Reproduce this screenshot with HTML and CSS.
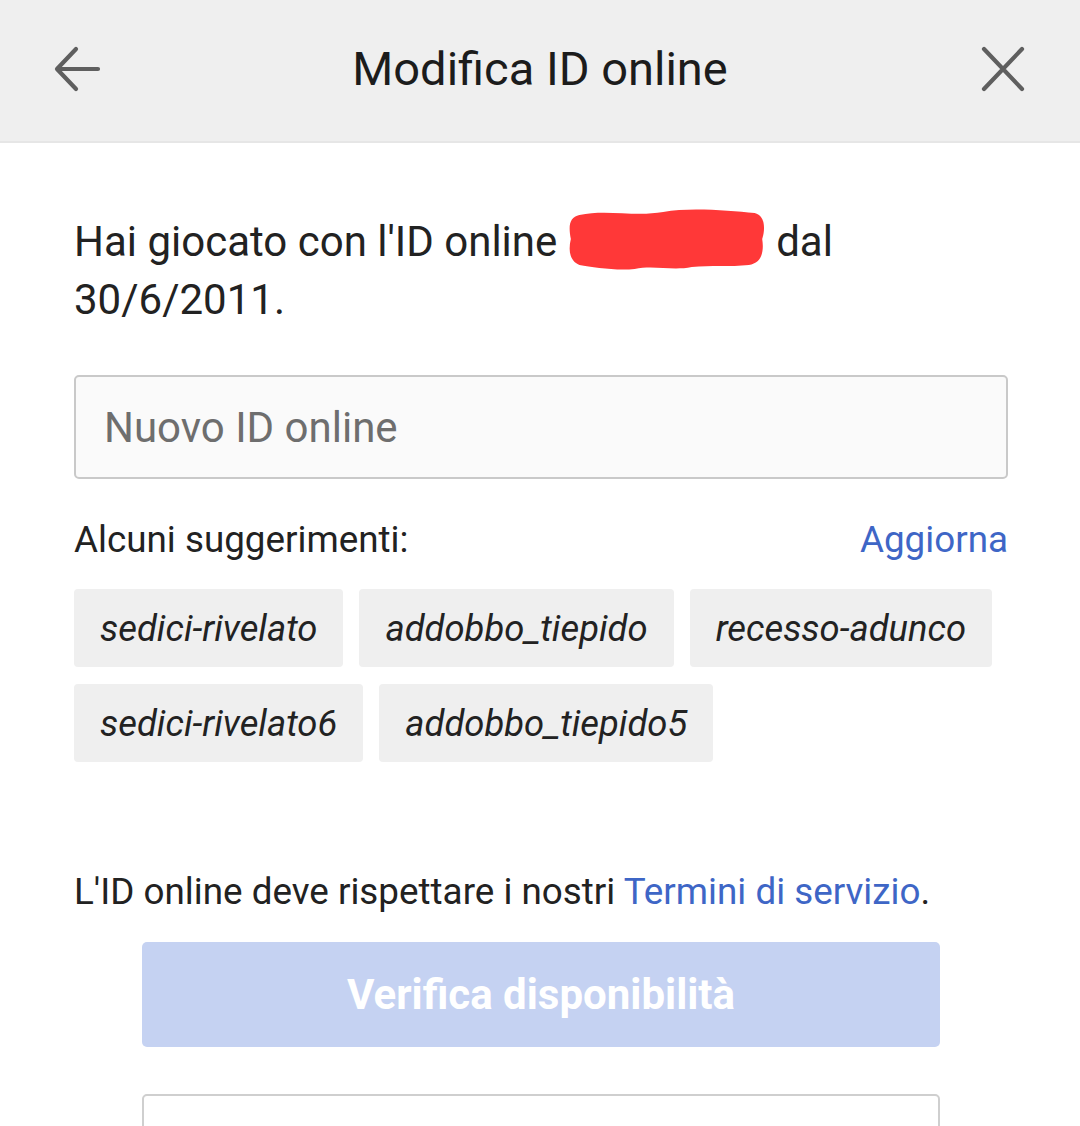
FILE: index.html
```html
<!DOCTYPE html>
<html lang="it">
<head>
    <meta charset="UTF-8">
    <meta name="viewport" content="width=device-width, initial-scale=1.0">
    <title>Modifica ID online</title>
    <link rel="stylesheet" href="styles.css">
</head>
<body>
    <header class="top-bar">
        <button class="icon-btn" aria-label="Indietro">
            <svg width="48" height="48" viewBox="0 0 48 48">
                <path d="M44 24H5M22 4L3 24l19 20" fill="none" stroke="#5f5f5f" stroke-width="4.2" stroke-linecap="round" stroke-linejoin="round"/>
            </svg>
        </button>
        <h1 class="title">Modifica ID online</h1>
        <button class="icon-btn" aria-label="Chiudi">
            <svg width="48" height="48" viewBox="0 0 48 48">
                <path d="M6 4L44 44M44 4L6 44" fill="none" stroke="#5f5f5f" stroke-width="4.2" stroke-linecap="round"/>
            </svg>
        </button>
    </header>

    <main class="content">
        <p class="intro">
            <span>Hai giocato con l'ID online</span>
            <svg class="redacted" width="198" height="64" viewBox="0 0 208 64" preserveAspectRatio="none">
                <path d="M12 8C40 2 70 10 100 5C130 0 170 4 196 6C206 8 208 20 204 32C206 44 204 56 190 58C170 60 150 58 130 60C110 64 90 58 70 62C50 64 26 60 12 58C2 54 0 44 3 32C0 18 2 10 12 8Z" fill="#ff3838"/>
            </svg>
            <span>dal</span><br>
            <span>30/6/2011.</span>
        </p>

        <input class="id-input" type="text" placeholder="Nuovo ID online">

        <div class="suggest-head">
            <span>Alcuni suggerimenti:</span>
            <a href="#" class="link">Aggiorna</a>
        </div>

        <div class="chips">
            <span class="chip">sedici-rivelato</span>
            <span class="chip">addobbo_tiepido</span>
            <span class="chip">recesso-adunco</span>
            <span class="chip">sedici-rivelato6</span>
            <span class="chip">addobbo_tiepido5</span>
        </div>

        <p class="terms">L'ID online deve rispettare i nostri <a href="#" class="link">Termini di servizio</a>.</p>

        <div class="actions">
            <button class="btn-check" disabled>Verifica disponibilità</button>
            <div class="next-box"></div>
        </div>
    </main>
</body>
</html>
```

FILE: styles.css
```css
/* General */
body {
    font-family: Roboto, 'Noto Sans', sans-serif;
    background-color: #ffffff;
    color: #202020;
    margin: 0;
    padding: 0;
    overflow: hidden;
}

/* Header */
.top-bar {
    height: 143px;
    background-color: #efefef;
    border-bottom: 2px solid #e6e6e6;
    display: flex;
    align-items: center;
    justify-content: space-between;
    padding: 0 54px 4px 54px;
    box-sizing: border-box;
}

.icon-btn {
    background: none;
    border: none;
    padding: 0;
    width: 48px;
    height: 48px;
    display: flex;
}

.title {
    margin: 0;
    font-size: 47px;
    font-weight: 400;
    color: #1c1c1c;
}

/* Content */
.content {
    padding: 0 72px 0 74px;
}

.intro {
    font-size: 42px;
    line-height: 57px;
    margin: 64px 0 0 0;
    color: #222;
}

.redacted {
    display: inline-block;
    vertical-align: -15px;
}

.id-input {
    display: block;
    width: 100%;
    height: 104px;
    margin-top: 47px;
    box-sizing: border-box;
    border: 2px solid #c9c9c9;
    border-radius: 5px;
    background-color: #fafafa;
    font-family: inherit;
    font-size: 42px;
    padding: 0 28px;
    color: #222;
}

.id-input::placeholder {
    color: #6e6e6e;
}

.suggest-head {
    display: flex;
    justify-content: space-between;
    align-items: center;
    font-size: 36.8px;
    margin-top: 39px;
    color: #222;
}

.link {
    color: #3e66c6;
    text-decoration: none;
}

/* Suggestion chips */
.chips {
    display: flex;
    flex-wrap: wrap;
    gap: 17px 16px;
    margin-top: 28px;
}

.chip {
    background-color: #efefef;
    border-radius: 4px;
    height: 78px;
    display: flex;
    align-items: center;
    padding: 0 26px;
    font-size: 36.4px;
    font-style: italic;
    color: #222;
}

.terms {
    font-size: 36.8px;
    margin: 108px 0 0 0;
    color: #222;
}

/* Actions */
.actions {
    display: flex;
    flex-direction: column;
    align-items: center;
    margin-top: 29px;
}

.btn-check {
    width: 798px;
    height: 105px;
    background-color: #c5d2f2;
    border: none;
    border-radius: 5px;
    color: #ffffff;
    font-family: inherit;
    font-size: 42px;
    font-weight: 700;
}

.next-box {
    width: 798px;
    height: 80px;
    margin-top: 47px;
    box-sizing: border-box;
    border: 2px solid #cfcfcf;
    border-radius: 5px;
    background-color: #ffffff;
}
```
